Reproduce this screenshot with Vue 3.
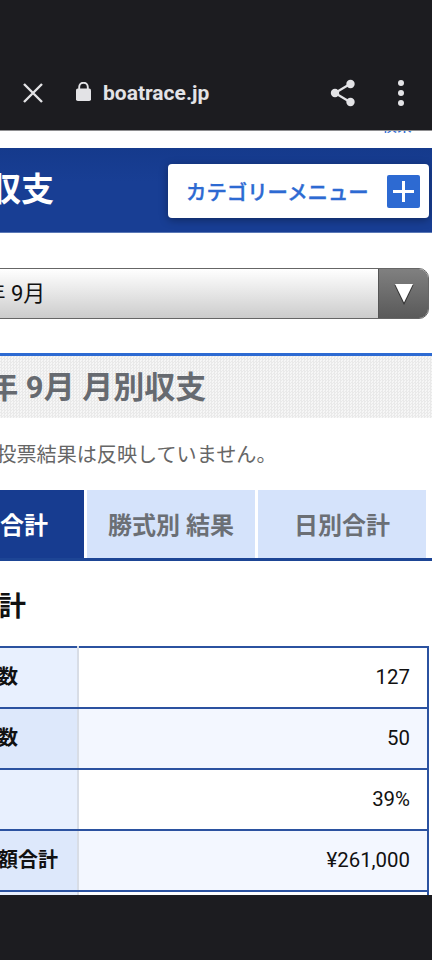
<script setup>
const rows = [
  { label: '投票回数', value: '127' },
  { label: '的中回数', value: '50' },
  { label: '的中率', value: '39%' },
  { label: '購入金額合計', value: '¥261,000' },
  { label: '払戻金額合計', value: '¥198,400' }
]
const tabs = [
  { label: '月別合計', active: true },
  { label: '勝式別 結果', active: false },
  { label: '日別合計', active: false }
]
</script>

<template>
  <div class="screen">
    <header class="browser-bar">
      <svg class="close" width="20" height="20" viewBox="0 0 20 20">
        <path d="M1 1 L19 19 M19 1 L1 19" stroke="#e3e3e6" stroke-width="2.4" fill="none" />
      </svg>
      <svg class="lock" width="15" height="19" viewBox="0 0 15 19">
        <path d="M3.2 7 V5 A4.3 4.3 0 0 1 11.8 5 V7" stroke="#e3e3e6" stroke-width="1.9" fill="none" />
        <rect x="0" y="6.5" width="15" height="12.5" rx="1.8" fill="#e3e3e6" />
      </svg>
      <span class="domain">boatrace.jp</span>
      <svg class="share" width="26" height="28" viewBox="0 0 26 28">
        <path d="M20 5 L5 14 L20 23" stroke="#e3e3e6" stroke-width="2.2" fill="none" />
        <circle cx="20.5" cy="5" r="4.2" fill="#e3e3e6" />
        <circle cx="5" cy="14" r="4.2" fill="#e3e3e6" />
        <circle cx="20.5" cy="23" r="4.2" fill="#e3e3e6" />
      </svg>
      <div class="dots"><i></i><i></i><i></i></div>
    </header>

    <main class="viewport">
      <div class="page">
        <div class="utility"><a class="utility-link">検索</a></div>

        <section class="category-head">
          <h1>月別収支</h1>
          <button class="category-btn">
            <span>カテゴリーメニュー</span>
            <span class="plus"></span>
          </button>
        </section>

        <div class="month-select">
          <span class="month-value">2021年 9月</span>
          <span class="arrow">
            <svg width="22" height="24" viewBox="0 0 22 24">
              <path d="M1.5 3 H20.5 L11 23 Z" fill="#333" />
              <path d="M2 2 H20 L11 20.5 Z" fill="#fff" />
            </svg>
          </span>
        </div>

        <h2 class="section-title">2021年 9月 月別収支</h2>
        <p class="note">※当日の投票結果は反映していません。</p>

        <nav class="tabs">
          <div v-for="tab in tabs" :key="tab.label" class="tab" :class="{ active: tab.active }">{{ tab.label }}</div>
        </nav>

        <h3 class="table-title">月別合計</h3>

        <table class="summary">
          <tbody>
            <tr v-for="row in rows" :key="row.label">
              <th>{{ row.label }}</th>
              <td>{{ row.value }}</td>
            </tr>
          </tbody>
        </table>
      </div>
    </main>

    <footer class="nav-bar"></footer>
  </div>
</template>

<style>
html, body {
  margin: 0;
  background: #1c1c20;
}
</style>

<style scoped>
.screen {
  width: 432px;
  height: 960px;
  display: flex;
  flex-direction: column;
  overflow: hidden;
  background: #fff;
  font-family: Roboto, "Noto Sans CJK JP", sans-serif;
}

.browser-bar {
  height: 131px;
  box-sizing: border-box;
  flex: none;
  background: #1c1c20;
  border-bottom: 1px solid #8e8e90;
  display: flex;
  align-items: center;
  padding: 55px 0 0 23px;
  color: #e3e3e6;
}
.lock {
  margin-left: 33px;
  margin-top: -3px;
}
.domain {
  margin-left: 12px;
  font-size: 21px;
  font-weight: 700;
}
.share {
  margin-left: auto;
}
.dots {
  margin: 0 28px 0 42px;
  display: flex;
  flex-direction: column;
  gap: 4px;
}
.dots i {
  display: block;
  width: 6px;
  height: 6px;
  border-radius: 50%;
  background: #e3e3e6;
}

.viewport {
  flex: 1;
  overflow: hidden;
  min-height: 0;
}
/* ページは横スクロールされた状態 */
.page {
  width: 519px;
  margin-left: -87px;
}

.utility {
  height: 17px;
  overflow: hidden;
  display: flex;
  justify-content: flex-end;
  padding-right: 20px;
}
.utility-link {
  font-size: 15px;
  line-height: 15px;
  margin-top: -12px;
  font-weight: 500;
  color: #2d6ad2;
}

.category-head {
  height: 85px;
  box-sizing: border-box;
  background: linear-gradient(#153a8c, #183e94 40%, #183e94);
  border-bottom: 1px solid #5a78b6;
  display: flex;
  align-items: center;
  justify-content: space-between;
  padding: 2px 3px 0 9px;
}
.category-head h1 {
  margin: 0 0 8px;
  font-size: 33px;
  font-weight: 700;
  color: #fff;
}
.category-btn {
  width: 261px;
  height: 54px;
  padding: 0 9px 0 18px;
  display: flex;
  align-items: center;
  justify-content: space-between;
  background: #fff;
  border: none;
  border-radius: 4px;
  box-shadow: 0 2px 8px rgba(0, 0, 0, 0.35);
  font-family: inherit;
  font-size: 20.4px;
  font-weight: 500;
  -webkit-text-stroke: 0.4px #2d6ad2;
  color: #2d6ad2;
}
.plus {
  position: relative;
  width: 33px;
  height: 33px;
  border-radius: 2px;
  background: #2d6ad2;
}
.plus::before,
.plus::after {
  content: "";
  position: absolute;
  background: #fff;
}
.plus::before {
  left: 6px;
  right: 6px;
  top: 15px;
  height: 3px;
}
.plus::after {
  top: 6px;
  bottom: 6px;
  left: 15px;
  width: 3px;
}

.month-select {
  height: 51px;
  box-sizing: border-box;
  margin: 35px 3px 0 0;
  display: flex;
  justify-content: space-between;
  align-items: stretch;
  border: 1px solid #666;
  border-radius: 10px;
  overflow: hidden;
  background: linear-gradient(#fff, #ccc);
}
.month-value {
  align-self: center;
  padding-left: 20px;
  margin-top: -6px;
  font-size: 22px;
  color: #111;
}
.arrow {
  width: 49px;
  display: flex;
  align-items: center;
  justify-content: center;
  background: linear-gradient(#808080, #595959);
  border-left: 1px solid #555;
}

.section-title {
  height: 65px;
  box-sizing: border-box;
  margin: 34px 0 0;
  border-top: 3px solid #2d6ad2;
  background-color: #f3f3f3;
  background-image: repeating-conic-gradient(#e9e9e9 0 25%, #f6f6f6 0 50%);
  background-size: 3px 3px;
  padding-left: 3px;
  font-size: 31px;
  font-weight: 700;
  line-height: 64px;
  color: #666a70;
}

.note {
  margin: 25px 0 0;
  padding-left: 3px;
  font-size: 20.1px;
  line-height: 24px;
  color: #666;
}

.tabs {
  margin-top: 23px;
  display: flex;
  gap: 3px;
  padding-left: 3px;
  border-bottom: 3px solid #1d4595;
}
.tab {
  width: 168px;
  height: 68px;
  box-sizing: border-box;
  padding-bottom: 2px;
  display: flex;
  align-items: center;
  justify-content: center;
  background: #d5e3fb;
  font-size: 24px;
  font-weight: 700;
  color: #6b6f75;
}
.tab.active {
  background: #173c90;
  color: #fff;
}

.table-title {
  margin: 29px 0 0;
  padding-left: 3px;
  font-size: 27.5px;
  line-height: 34px;
  font-weight: 700;
  color: #111;
}

.summary {
  width: 513px;
  margin: 22px 0 0 3px;
  border-collapse: collapse;
  table-layout: fixed;
}
.summary tr {
  height: 61px;
}
.summary th,
.summary td {
  border: 2px solid #2b52a0;
  color: #111;
}
.summary th {
  width: 161px;
  box-sizing: border-box;
  padding: 0 0 4px 20px;
  text-align: left;
  white-space: nowrap;
  font-size: 20px;
  background: #e8f0fe;
  border-right: 2px solid #d8dde6;
}
.summary td {
  padding: 0 17px 1px 0;
  text-align: right;
  font-size: 20.4px;
  background: #fff;
  border-left: none;
}
.summary tr:nth-child(even) th {
  background: #dde8fb;
}
.summary tr:nth-child(even) td {
  background: #f3f7ff;
}

.nav-bar {
  flex: none;
  height: 65px;
  background: #1c1c20;
}
</style>
